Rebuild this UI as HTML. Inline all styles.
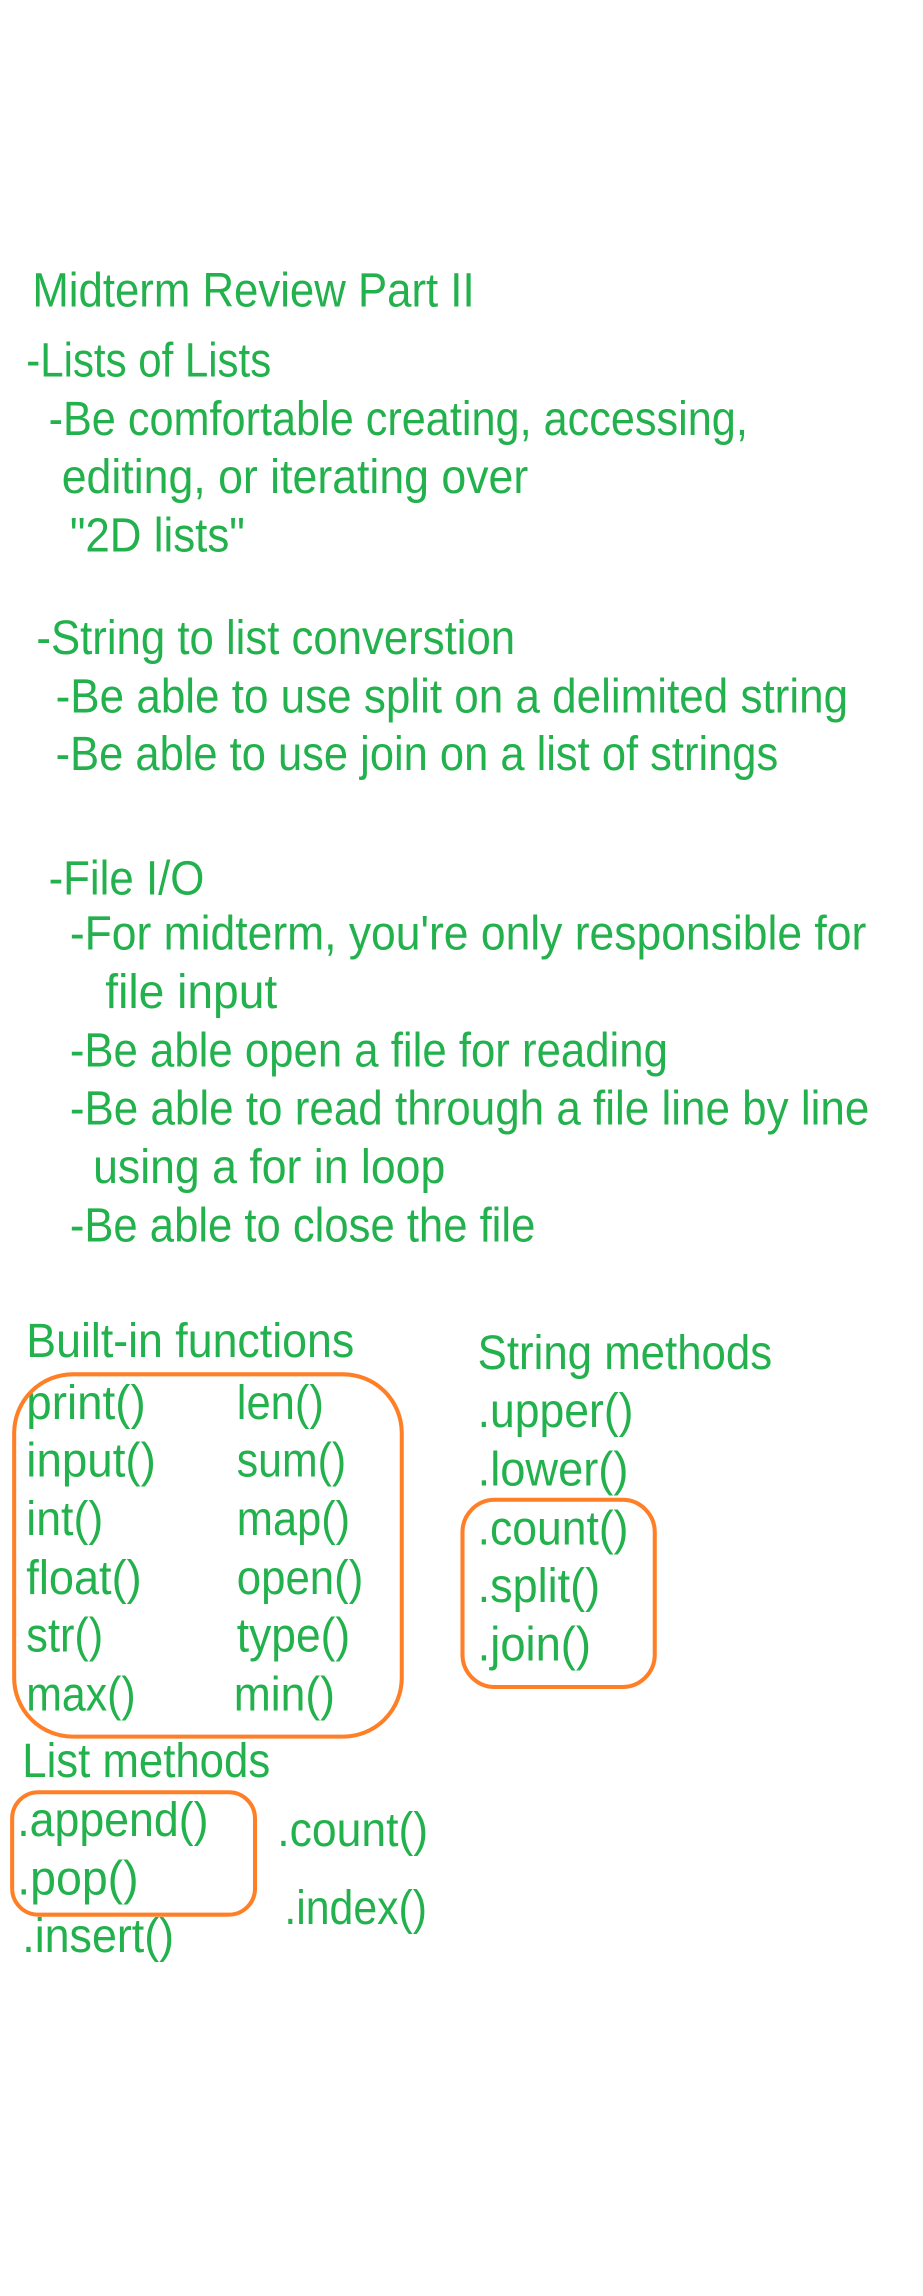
<!DOCTYPE html>
<html><head><meta charset="utf-8"><style>
html,body{margin:0;padding:0;background:#fff;}
svg{display:block;}
text{font-family:"Liberation Sans Narrow","Liberation Sans",sans-serif;font-size:48px;fill:#22b14c;}
</style></head><body>
<svg width="923" height="2296" viewBox="0 0 923 2296" xmlns="http://www.w3.org/2000/svg">
<g transform="scale(1.012)">
<text x="32" y="303" textLength="437" lengthAdjust="spacingAndGlyphs">Midterm Review Part II</text>
<text x="26" y="372" textLength="242" lengthAdjust="spacingAndGlyphs">-Lists of Lists</text>
<text x="48" y="430" textLength="691" lengthAdjust="spacingAndGlyphs">-Be comfortable creating, accessing,</text>
<text x="61" y="487" textLength="461" lengthAdjust="spacingAndGlyphs">editing, or iterating over</text>
<text x="69" y="545" textLength="173" lengthAdjust="spacingAndGlyphs">"2D lists"</text>
<text x="36" y="646" textLength="473" lengthAdjust="spacingAndGlyphs">-String to list converstion</text>
<text x="55" y="704" textLength="783" lengthAdjust="spacingAndGlyphs">-Be able to use split on a delimited string</text>
<text x="55" y="761" textLength="714" lengthAdjust="spacingAndGlyphs">-Be able to use join on a list of strings</text>
<text x="48" y="884" textLength="154" lengthAdjust="spacingAndGlyphs">-File I/O</text>
<text x="69" y="938" textLength="787" lengthAdjust="spacingAndGlyphs">-For midterm, you're only responsible for</text>
<text x="104" y="996" textLength="170" lengthAdjust="spacingAndGlyphs">file input</text>
<text x="69" y="1054" textLength="591" lengthAdjust="spacingAndGlyphs">-Be able open a file for reading</text>
<text x="69" y="1111" textLength="790" lengthAdjust="spacingAndGlyphs">-Be able to read through a file line by line</text>
<text x="92" y="1169" textLength="348" lengthAdjust="spacingAndGlyphs">using a for in loop</text>
<text x="69" y="1227" textLength="460" lengthAdjust="spacingAndGlyphs">-Be able to close the file</text>

<text x="26" y="1341" textLength="324" lengthAdjust="spacingAndGlyphs">Built-in functions</text>
<text x="472" y="1353" textLength="291" lengthAdjust="spacingAndGlyphs">String methods</text>

<text x="26" y="1402" textLength="118" lengthAdjust="spacingAndGlyphs">print()</text><text x="234" y="1402" textLength="86" lengthAdjust="spacingAndGlyphs">len()</text>
<text x="26" y="1459" textLength="128" lengthAdjust="spacingAndGlyphs">input()</text><text x="234" y="1459" textLength="108" lengthAdjust="spacingAndGlyphs">sum()</text>
<text x="26" y="1517" textLength="76" lengthAdjust="spacingAndGlyphs">int()</text><text x="234" y="1517" textLength="112" lengthAdjust="spacingAndGlyphs">map()</text>
<text x="26" y="1575" textLength="114" lengthAdjust="spacingAndGlyphs">float()</text><text x="234" y="1575" textLength="125" lengthAdjust="spacingAndGlyphs">open()</text>
<text x="26" y="1632" textLength="76" lengthAdjust="spacingAndGlyphs">str()</text><text x="234" y="1632" textLength="112" lengthAdjust="spacingAndGlyphs">type()</text>
<text x="26" y="1690" textLength="108" lengthAdjust="spacingAndGlyphs">max()</text><text x="231" y="1690" textLength="100" lengthAdjust="spacingAndGlyphs">min()</text>

<text x="472" y="1410" textLength="154" lengthAdjust="spacingAndGlyphs">.upper()</text>
<text x="472" y="1468" textLength="149" lengthAdjust="spacingAndGlyphs">.lower()</text>
<text x="472" y="1526" textLength="149" lengthAdjust="spacingAndGlyphs">.count()</text>
<text x="472" y="1583" textLength="121" lengthAdjust="spacingAndGlyphs">.split()</text>
<text x="472" y="1641" textLength="112" lengthAdjust="spacingAndGlyphs">.join()</text>

<text x="22" y="1756" textLength="245" lengthAdjust="spacingAndGlyphs">List methods</text>
<text x="17" y="1814" textLength="189" lengthAdjust="spacingAndGlyphs">.append()</text>
<text x="17" y="1872" textLength="120" lengthAdjust="spacingAndGlyphs">.pop()</text>
<text x="22" y="1929" textLength="150" lengthAdjust="spacingAndGlyphs">.insert()</text>
<text x="274" y="1824" textLength="149" lengthAdjust="spacingAndGlyphs">.count()</text>
<text x="281" y="1901" textLength="141" lengthAdjust="spacingAndGlyphs">.index()</text>
<g fill="none" stroke="#ff7f27" stroke-width="4">
<rect x="14" y="1358" width="383" height="358" rx="58" ry="58"/>
<rect x="457" y="1482" width="190" height="185" rx="32" ry="32"/>
<rect x="12" y="1771" width="240" height="121" rx="26" ry="26"/>
</g>
</g>
</svg>
</body></html>
